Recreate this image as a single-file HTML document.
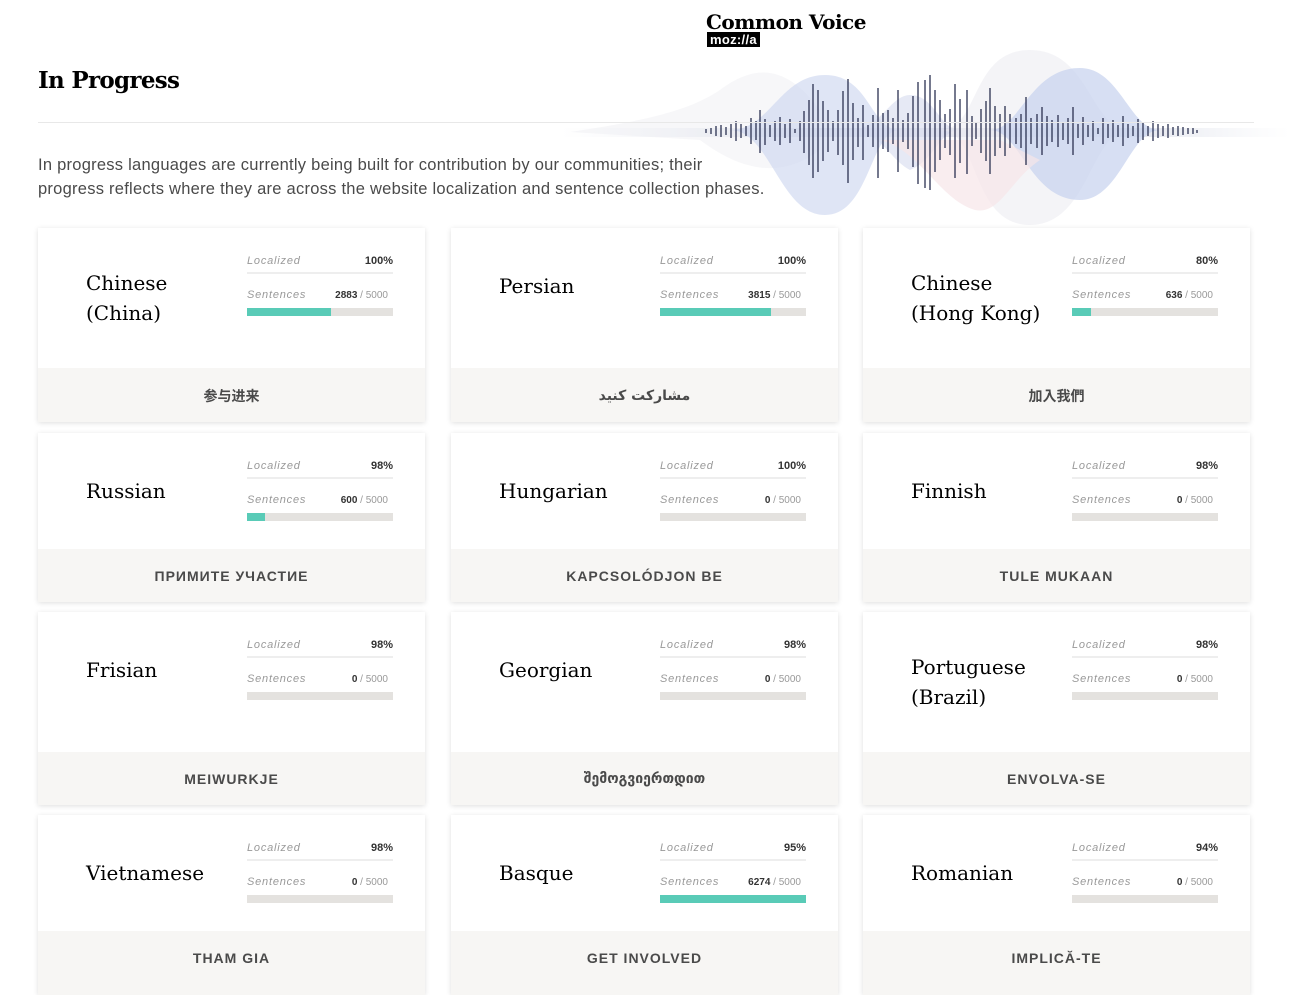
<!DOCTYPE html>
<html><head><meta charset="utf-8"><style>
*{margin:0;padding:0;box-sizing:border-box}
body{width:1302px;height:977px;overflow:hidden;background:#fff;position:relative;font-family:"Liberation Sans","Noto Sans CJK SC",sans-serif;color:#4a4a4a}
.logo{position:absolute;left:706px;top:10px;font-family:"DejaVu Serif",serif;font-weight:bold;font-size:20px;color:#000;letter-spacing:-0.5px;line-height:24px}
.moz{position:absolute;left:707px;top:32px;background:#000;color:#fff;font-family:"Liberation Sans",sans-serif;font-weight:bold;font-size:13px;line-height:15px;padding:0 3px;letter-spacing:.3px}
h1{position:absolute;left:38px;top:67px;font-family:"DejaVu Serif",serif;font-size:23px;font-weight:bold;color:#000;letter-spacing:-0.7px}
.hr{position:absolute;left:38px;top:122px;width:1216px;height:1px;background:#e8e8e8}
.intro{position:absolute;left:38px;top:153px;font-size:16.5px;line-height:24px;color:#4a4a4a;width:800px;letter-spacing:.25px;white-space:nowrap}
.card{position:absolute;width:387px;background:#fff;box-shadow:0 1px 5px rgba(0,0,0,.13)}
.name{position:absolute;left:48px;font-family:"DejaVu Serif",serif;font-size:20px;line-height:30px;color:#000}
.st{position:absolute;left:209px;width:146px}
.lab{position:absolute;left:0;font-style:italic;font-size:11px;color:#999;letter-spacing:.8px}
.val{position:absolute;right:0;font-size:11px;font-weight:bold;color:#333}
.sv{position:absolute;right:5px;font-size:10px;color:#999}
.sv b{color:#333}
.ln{position:absolute;left:0;top:17px;width:146px;height:2px;background:#eee}
.bar{position:absolute;left:0;top:47px;width:146px;height:8px;background:#e4e2df}
.bar i{display:block;height:8px;background:#59cbb7}
.ft{position:absolute;left:0;right:0;bottom:0;background:#f7f6f4;text-align:center;font-size:14px;font-weight:bold;letter-spacing:1px;color:#4a4a4a}
</style></head><body>
<svg style="position:absolute;left:560px;top:40px" width="742" height="190" viewBox="560 40 742 190">
<defs><linearGradient id="fade" x1="0" x2="1"><stop offset="0" stop-color="#eef0f5" stop-opacity="0"/><stop offset=".3" stop-color="#e7e9f0"/><stop offset=".8" stop-color="#e7e9f0"/><stop offset="1" stop-color="#eef0f5" stop-opacity="0"/></linearGradient></defs>
<path d="M570 132 C650 120 690 110 720 90 C760 60 790 70 820 110 L820 150 C780 180 740 170 700 140 Z" fill="#f3f3f6" opacity=".7"/>
<path d="M560 128 L1290 128 L1290 137 L560 137 Z" fill="url(#fade)"/>
<path d="M730 130 C770 130 780 75 825 75 C870 75 870 130 900 130 C870 130 870 215 825 215 C780 215 770 130 730 130Z" fill="#c9d4ee" opacity=".6"/>
<path d="M850 130 C880 130 890 95 910 95 C935 95 940 130 960 130 C940 130 935 160 910 170 C890 160 880 130 850 130Z" fill="#d6dbef" opacity=".6"/>
<path d="M940 130 C980 130 970 50 1030 50 C1090 50 1090 130 1130 130 C1090 130 1090 225 1030 225 C970 225 980 130 940 130Z" fill="#ececf2" opacity=".6"/>
<path d="M990 130 C1020 130 1030 68 1080 68 C1120 68 1130 130 1160 130 C1130 130 1120 200 1080 200 C1030 200 1020 130 990 130Z" fill="#c6d2ee" opacity=".7"/>
<path d="M880 140 C920 150 940 200 975 210 C1000 215 1010 180 1040 160 L1000 140Z" fill="#f6e6e8" opacity=".7"/>
<g stroke="#2b3150" stroke-width="1.3">
<line x1="706" y1="129" x2="706" y2="133"/><line x1="711" y1="128" x2="711" y2="134"/><line x1="716" y1="126" x2="716" y2="136"/><line x1="721" y1="125" x2="721" y2="137"/><line x1="726" y1="127" x2="726" y2="135"/><line x1="731" y1="124" x2="731" y2="138"/><line x1="736" y1="121" x2="736" y2="141"/><line x1="741" y1="124" x2="741" y2="138"/><line x1="746" y1="126" x2="746" y2="136"/><line x1="751" y1="118" x2="751" y2="144"/><line x1="756" y1="121" x2="756" y2="140"/><line x1="760" y1="110" x2="760" y2="153"/><line x1="765" y1="119" x2="765" y2="145"/><line x1="770" y1="125" x2="770" y2="137"/><line x1="775" y1="121" x2="775" y2="141"/><line x1="780" y1="117" x2="780" y2="145"/><line x1="785" y1="124" x2="785" y2="138"/><line x1="790" y1="119" x2="790" y2="143"/><line x1="795" y1="129" x2="795" y2="133"/><line x1="800" y1="121" x2="800" y2="141"/><line x1="804" y1="111" x2="804" y2="153"/><line x1="809" y1="100" x2="809" y2="165"/><line x1="813" y1="84" x2="813" y2="178"/><line x1="818" y1="90" x2="818" y2="172"/><line x1="823" y1="101" x2="823" y2="161"/><line x1="828" y1="110" x2="828" y2="152"/><line x1="833" y1="121" x2="833" y2="141"/><line x1="838" y1="110" x2="838" y2="155"/><line x1="843" y1="91" x2="843" y2="165"/><line x1="848" y1="79" x2="848" y2="183"/><line x1="853" y1="103" x2="853" y2="160"/><line x1="858" y1="118" x2="858" y2="147"/><line x1="863" y1="105" x2="863" y2="160"/><line x1="868" y1="125" x2="868" y2="137"/><line x1="873" y1="115" x2="873" y2="147"/><line x1="878" y1="88" x2="878" y2="178"/><line x1="883" y1="113" x2="883" y2="149"/><line x1="888" y1="110" x2="888" y2="152"/><line x1="893" y1="118" x2="893" y2="144"/><line x1="898" y1="90" x2="898" y2="172"/><line x1="903" y1="120" x2="903" y2="142"/><line x1="908" y1="113" x2="908" y2="149"/><line x1="913" y1="96" x2="913" y2="167"/><line x1="918" y1="82" x2="918" y2="184"/><line x1="925" y1="80" x2="925" y2="188"/><line x1="930" y1="75" x2="930" y2="190"/><line x1="935" y1="90" x2="935" y2="172"/><line x1="940" y1="100" x2="940" y2="160"/><line x1="945" y1="114" x2="945" y2="148"/><line x1="950" y1="109" x2="950" y2="155"/><line x1="955" y1="84" x2="955" y2="178"/><line x1="960" y1="99" x2="960" y2="163"/><line x1="967" y1="90" x2="967" y2="174"/><line x1="972" y1="116" x2="972" y2="146"/><line x1="976" y1="123" x2="976" y2="139"/><line x1="981" y1="109" x2="981" y2="153"/><line x1="986" y1="101" x2="986" y2="161"/><line x1="990" y1="88" x2="990" y2="174"/><line x1="995" y1="106" x2="995" y2="156"/><line x1="1000" y1="114" x2="1000" y2="148"/><line x1="1005" y1="106" x2="1005" y2="156"/><line x1="1010" y1="114" x2="1010" y2="148"/><line x1="1016" y1="118" x2="1016" y2="144"/><line x1="1021" y1="114" x2="1021" y2="148"/><line x1="1026" y1="97" x2="1026" y2="165"/><line x1="1031" y1="118" x2="1031" y2="144"/><line x1="1037" y1="114" x2="1037" y2="148"/><line x1="1042" y1="107" x2="1042" y2="155"/><line x1="1047" y1="116" x2="1047" y2="146"/><line x1="1052" y1="120" x2="1052" y2="142"/><line x1="1058" y1="115" x2="1058" y2="147"/><line x1="1063" y1="122" x2="1063" y2="140"/><line x1="1068" y1="118" x2="1068" y2="144"/><line x1="1073" y1="107" x2="1073" y2="155"/><line x1="1078" y1="124" x2="1078" y2="138"/><line x1="1083" y1="117" x2="1083" y2="145"/><line x1="1088" y1="125" x2="1088" y2="137"/><line x1="1093" y1="121" x2="1093" y2="141"/><line x1="1098" y1="128" x2="1098" y2="134"/><line x1="1103" y1="118" x2="1103" y2="144"/><line x1="1108" y1="124" x2="1108" y2="138"/><line x1="1113" y1="120" x2="1113" y2="142"/><line x1="1118" y1="125" x2="1118" y2="137"/><line x1="1123" y1="116" x2="1123" y2="146"/><line x1="1128" y1="124" x2="1128" y2="138"/><line x1="1133" y1="126" x2="1133" y2="136"/><line x1="1138" y1="119" x2="1138" y2="143"/><line x1="1143" y1="122" x2="1143" y2="140"/><line x1="1148" y1="126" x2="1148" y2="136"/><line x1="1153" y1="121" x2="1153" y2="141"/><line x1="1158" y1="124" x2="1158" y2="138"/><line x1="1163" y1="126" x2="1163" y2="136"/><line x1="1168" y1="124" x2="1168" y2="138"/><line x1="1173" y1="127" x2="1173" y2="135"/><line x1="1178" y1="126" x2="1178" y2="136"/><line x1="1183" y1="127" x2="1183" y2="135"/><line x1="1188" y1="128" x2="1188" y2="134"/><line x1="1193" y1="128" x2="1193" y2="134"/><line x1="1197" y1="130" x2="1197" y2="133"/>
</g></svg>
<div class="logo">Common Voice</div>
<div class="moz">moz://a</div>
<h1>In Progress</h1>
<div class="hr"></div>
<div class="intro">In progress languages are currently being built for contribution by our communities; their<br>progress reflects where they are across the website localization and sentence collection phases.</div>

<!-- Row 1 -->
<div class="card" style="left:38px;top:228px;height:194px"><div class="name" style="top:40px">Chinese<br>(China)</div>
<div class="st" style="top:27px"><span class="lab">Localized</span><span class="val">100%</span><div class="ln"></div><span class="lab" style="top:34px">Sentences</span><span class="sv" style="top:35px"><b>2883</b> / 5000</span><div class="bar" style="top:53px"><i style="width:57.7%"></i></div></div>
<div class="ft" style="height:54px;line-height:56px;letter-spacing:0">参与进来</div></div>
<div class="card" style="left:451px;top:228px;height:194px"><div class="name" style="top:43px">Persian</div>
<div class="st" style="top:27px"><span class="lab">Localized</span><span class="val">100%</span><div class="ln"></div><span class="lab" style="top:34px">Sentences</span><span class="sv" style="top:35px"><b>3815</b> / 5000</span><div class="bar" style="top:53px"><i style="width:76.3%"></i></div></div>
<div class="ft" style="height:54px;line-height:56px;letter-spacing:0;font-family:'DejaVu Sans',sans-serif">مشارکت کنید</div></div>
<div class="card" style="left:863px;top:228px;height:194px"><div class="name" style="top:40px">Chinese<br>(Hong Kong)</div>
<div class="st" style="top:27px"><span class="lab">Localized</span><span class="val">80%</span><div class="ln"></div><span class="lab" style="top:34px">Sentences</span><span class="sv" style="top:35px"><b>636</b> / 5000</span><div class="bar" style="top:53px"><i style="width:12.7%"></i></div></div>
<div class="ft" style="height:54px;line-height:56px;letter-spacing:0;font-family:'Liberation Sans','Noto Sans CJK TC',sans-serif">加入我們</div></div>

<!-- Row 2 -->
<div class="card" style="left:38px;top:433px;height:169px"><div class="name" style="top:43px">Russian</div>
<div class="st" style="top:27px"><span class="lab">Localized</span><span class="val">98%</span><div class="ln"></div><span class="lab" style="top:34px">Sentences</span><span class="sv" style="top:35px"><b>600</b> / 5000</span><div class="bar" style="top:53px"><i style="width:12%"></i></div></div>
<div class="ft" style="height:53px;line-height:54px">ПРИМИТЕ УЧАСТИЕ</div></div>
<div class="card" style="left:451px;top:433px;height:169px"><div class="name" style="top:43px">Hungarian</div>
<div class="st" style="top:27px"><span class="lab">Localized</span><span class="val">100%</span><div class="ln"></div><span class="lab" style="top:34px">Sentences</span><span class="sv" style="top:35px"><b>0</b> / 5000</span><div class="bar" style="top:53px"></div></div>
<div class="ft" style="height:53px;line-height:54px">KAPCSOLÓDJON BE</div></div>
<div class="card" style="left:863px;top:433px;height:169px"><div class="name" style="top:43px">Finnish</div>
<div class="st" style="top:27px"><span class="lab">Localized</span><span class="val">98%</span><div class="ln"></div><span class="lab" style="top:34px">Sentences</span><span class="sv" style="top:35px"><b>0</b> / 5000</span><div class="bar" style="top:53px"></div></div>
<div class="ft" style="height:53px;line-height:54px">TULE MUKAAN</div></div>

<!-- Row 3 -->
<div class="card" style="left:38px;top:612px;height:193px"><div class="name" style="top:43px">Frisian</div>
<div class="st" style="top:27px"><span class="lab">Localized</span><span class="val">98%</span><div class="ln"></div><span class="lab" style="top:34px">Sentences</span><span class="sv" style="top:35px"><b>0</b> / 5000</span><div class="bar" style="top:53px"></div></div>
<div class="ft" style="height:53px;line-height:54px">MEIWURKJE</div></div>
<div class="card" style="left:451px;top:612px;height:193px"><div class="name" style="top:43px">Georgian</div>
<div class="st" style="top:27px"><span class="lab">Localized</span><span class="val">98%</span><div class="ln"></div><span class="lab" style="top:34px">Sentences</span><span class="sv" style="top:35px"><b>0</b> / 5000</span><div class="bar" style="top:53px"></div></div>
<div class="ft" style="height:53px;line-height:54px;letter-spacing:0;font-family:'DejaVu Sans',sans-serif">შემოგვიერთდით</div></div>
<div class="card" style="left:863px;top:612px;height:193px"><div class="name" style="top:40px">Portuguese<br>(Brazil)</div>
<div class="st" style="top:27px"><span class="lab">Localized</span><span class="val">98%</span><div class="ln"></div><span class="lab" style="top:34px">Sentences</span><span class="sv" style="top:35px"><b>0</b> / 5000</span><div class="bar" style="top:53px"></div></div>
<div class="ft" style="height:53px;line-height:54px">ENVOLVA-SE</div></div>

<!-- Row 4 -->
<div class="card" style="left:38px;top:815px;height:180px"><div class="name" style="top:43px">Vietnamese</div>
<div class="st" style="top:27px"><span class="lab">Localized</span><span class="val">98%</span><div class="ln"></div><span class="lab" style="top:34px">Sentences</span><span class="sv" style="top:35px"><b>0</b> / 5000</span><div class="bar" style="top:53px"></div></div>
<div class="ft" style="height:64px;line-height:54px">THAM GIA</div></div>
<div class="card" style="left:451px;top:815px;height:180px"><div class="name" style="top:43px">Basque</div>
<div class="st" style="top:27px"><span class="lab">Localized</span><span class="val">95%</span><div class="ln"></div><span class="lab" style="top:34px">Sentences</span><span class="sv" style="top:35px"><b>6274</b> / 5000</span><div class="bar" style="top:53px"><i style="width:100%"></i></div></div>
<div class="ft" style="height:64px;line-height:54px">GET INVOLVED</div></div>
<div class="card" style="left:863px;top:815px;height:180px"><div class="name" style="top:43px">Romanian</div>
<div class="st" style="top:27px"><span class="lab">Localized</span><span class="val">94%</span><div class="ln"></div><span class="lab" style="top:34px">Sentences</span><span class="sv" style="top:35px"><b>0</b> / 5000</span><div class="bar" style="top:53px"></div></div>
<div class="ft" style="height:64px;line-height:54px">IMPLICĂ-TE</div></div>
</body></html>
